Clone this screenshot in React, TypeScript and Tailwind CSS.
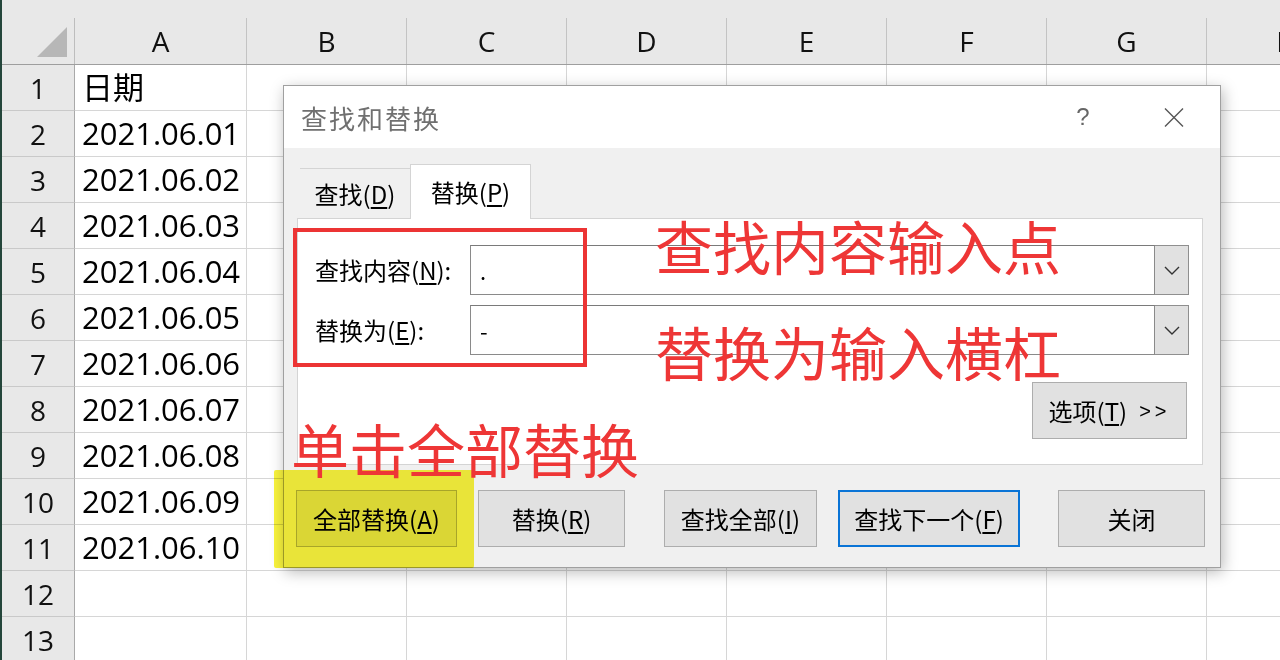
import React from "react";

const cols = ["A", "B", "C", "D", "E", "F", "G", "H"];
const colW = ["w-[172px]", "w-[160px]", "w-[160px]", "w-[160px]", "w-[160px]", "w-[160px]", "w-[160px]", "w-[160px]"];
const rows: string[] = [
  "日期",
  "2021.06.01",
  "2021.06.02",
  "2021.06.03",
  "2021.06.04",
  "2021.06.05",
  "2021.06.06",
  "2021.06.07",
  "2021.06.08",
  "2021.06.09",
  "2021.06.10",
  "",
  "",
];

function Btn({
  children,
  w,
  ml,
  primary,
}: {
  children: React.ReactNode;
  w: string;
  ml?: string;
  primary?: boolean;
}) {
  return (
    <div
      className={`${w} ${ml ?? ""} h-[57px] shrink-0 flex items-center justify-center bg-[#e1e1e1] text-[24px] text-black whitespace-nowrap ${
        primary ? "border-2 border-[#0a74d6]" : "border border-[#adadad]"
      }`}
    >
      {children}
    </div>
  );
}

function Chevron() {
  return (
    <svg width="16" height="9" viewBox="0 0 16 9" fill="none">
      <path d="M1 1 L8 8 L15 1" stroke="#333" strokeWidth="1.4" />
    </svg>
  );
}

export default function App() {
  return (
    <div className="relative w-[1280px] h-[660px] overflow-hidden bg-white border-l-2 border-[#24463b] font-['Open_Sans','Noto_Sans_CJK_SC',sans-serif]">
      {/* Spreadsheet */}
      <div className="flex flex-col">
        {/* header row */}
        <div className="flex h-[65px] bg-[#e8e8e8] border-b border-[#9e9e9e] shrink-0">
          <div className="w-[73px] shrink-0 flex flex-col">
            <div className="h-[18px]" />
            <div className="flex-1 border-r border-[#bdbdbd] flex items-end justify-end pr-[7px] pb-[7px]">
              <svg width="30" height="30" viewBox="0 0 30 30">
                <polygon points="30,0 30,30 0,30" fill="#b7b7b7" />
              </svg>
            </div>
          </div>
          {cols.map((c, i) => (
            <div key={c} className={`${colW[i]} shrink-0 flex flex-col`}>
              <div className="h-[18px]" />
              <div className="flex-1 border-r border-[#c3c3c3] flex items-center justify-center text-[28px] text-[#111]">
                {c}
              </div>
            </div>
          ))}
        </div>
        {rows.map((v, r) => (
          <div key={r} className="flex h-[46px] shrink-0">
            <div className="w-[73px] shrink-0 bg-[#e8e8e8] border-r border-[#a9a9a9] border-b border-b-[#c9c9c9] flex items-center justify-center text-[28px] text-[#111]">
              {r + 1}
            </div>
            {cols.map((c, i) => (
              <div
                key={c}
                className={`${colW[i]} shrink-0 border-r border-b border-[#d6d6d6] flex items-center pl-[7px] text-[31px] text-black leading-none whitespace-nowrap`}
              >
                {i === 0 ? v : ""}
              </div>
            ))}
          </div>
        ))}
      </div>

      {/* Dialog */}
      <div className="absolute left-[281px] top-[85px] w-[938px] h-[483px] border border-[#a0a0a0] bg-[#f0f0f0] flex flex-col shadow-[2px_4px_14px_rgba(0,0,0,0.28)] font-['Noto_Sans_CJK_SC',sans-serif] text-black">
        {/* title bar */}
        <div className="h-[62px] shrink-0 bg-white flex items-center pr-[36px]">
          <div className="ml-[17px] text-[26px] tracking-[2px] text-[#707070]">查找和替换</div>
          <div className="ml-auto w-[20px] text-center text-[24px] text-[#666] font-['Liberation_Sans',sans-serif]">?</div>
          <div className="ml-[71px] w-[20px] h-[20px] flex items-center justify-center">
            <svg width="20" height="19" viewBox="0 0 20 19" fill="none">
              <path d="M1 0.5 L19 18.5 M19 0.5 L1 18.5" stroke="#555" strokeWidth="1.4" />
            </svg>
          </div>
        </div>

        {/* body */}
        <div className="flex-1 flex flex-col pl-[13px] pr-[17px] pt-[16px]">
          {/* tabs */}
          <div className="flex items-end h-[55px] -mb-px relative z-10 pl-[3px]">
            <div className="w-[110px] h-[51px] border-t border-[#d4d4d4] flex items-center justify-center text-[24px]">
              查找(<u className="underline-offset-[3px]">D</u>)
            </div>
            <div className="w-[121px] h-[55px] bg-white border border-b-0 border-[#d4d4d4] flex items-center justify-center text-[24px]">
              替换(<u className="underline-offset-[3px]">P</u>)
            </div>
          </div>
          {/* panel */}
          <div className="h-[247px] shrink-0 bg-white border border-[#d4d4d4] flex flex-col pt-[26px] pr-[13px]">
            <div className="flex h-[50px] items-stretch">
              <div className="w-[172px] pl-[17px] flex items-center text-[24px] whitespace-nowrap">
                查找内容(<u className="underline-offset-[3px]">N</u>):
              </div>
              <div className="flex-1 border border-[#8a8a8a] border-t-[#7a7a7a] flex items-center pl-[9px] text-[22px] leading-none">
                .
              </div>
              <div className="w-[34px] bg-[#e1e1e1] border border-l-0 border-[#8f8f8f] flex items-center justify-center">
                <Chevron />
              </div>
            </div>
            <div className="flex h-[50px] items-stretch mt-[10px]">
              <div className="w-[172px] pl-[17px] flex items-center text-[24px] whitespace-nowrap">
                替换为(<u className="underline-offset-[3px]">E</u>):
              </div>
              <div className="flex-1 border border-[#8a8a8a] border-t-[#7a7a7a] flex items-center pl-[9px] text-[22px] leading-none">
                -
              </div>
              <div className="w-[34px] bg-[#e1e1e1] border border-l-0 border-[#8f8f8f] flex items-center justify-center">
                <Chevron />
              </div>
            </div>
            <div className="flex justify-end mt-[27px] pr-[2px]">
              <div className="w-[155px] h-[57px] bg-[#e1e1e1] border border-[#adadad] flex items-center justify-center text-[24px] whitespace-nowrap">
                选项(<u className="underline-offset-[3px]">T</u>)<span className="ml-[12px] tracking-[4px] font-['Liberation_Sans',sans-serif] text-[20px]">&gt;&gt;</span>
              </div>
            </div>
          </div>
          {/* buttons */}
          <div className="flex mt-[25px] -ml-[1px]">
            <Btn w="w-[161px]">
              全部替换(<u className="underline-offset-[3px]">A</u>)
            </Btn>
            <Btn w="w-[147px]" ml="ml-[21px]">
              替换(<u className="underline-offset-[3px]">R</u>)
            </Btn>
            <Btn w="w-[153px]" ml="ml-[39px]">
              查找全部(<u className="underline-offset-[3px]">I</u>)
            </Btn>
            <Btn w="w-[182px]" ml="ml-[21px]" primary>
              查找下一个(<u className="underline-offset-[3px]">F</u>)
            </Btn>
            <Btn w="w-[147px]" ml="ml-[38px]">
              关闭
            </Btn>
          </div>
        </div>
      </div>

      {/* Annotations */}
      <div className="absolute left-[291px] top-[228px] w-[294px] h-[139px] border-4 border-[#ec3434]" />
      <div className="absolute left-[272px] top-[470px] w-[200px] h-[98px] bg-[#f8f33c] mix-blend-multiply rounded-[2px]" />
      <div className="absolute left-[653px] top-[216px] text-[58px] leading-none text-[#ee3636] whitespace-nowrap font-['Noto_Sans_CJK_SC',sans-serif]">
        查找内容输入点
      </div>
      <div className="absolute left-[653px] top-[322px] text-[58px] leading-none text-[#ee3636] whitespace-nowrap font-['Noto_Sans_CJK_SC',sans-serif]">
        替换为输入横杠
      </div>
      <div className="absolute left-[289px] top-[419px] text-[58px] leading-none text-[#ee3636] whitespace-nowrap font-['Noto_Sans_CJK_SC',sans-serif]">
        单击全部替换
      </div>
    </div>
  );
}
